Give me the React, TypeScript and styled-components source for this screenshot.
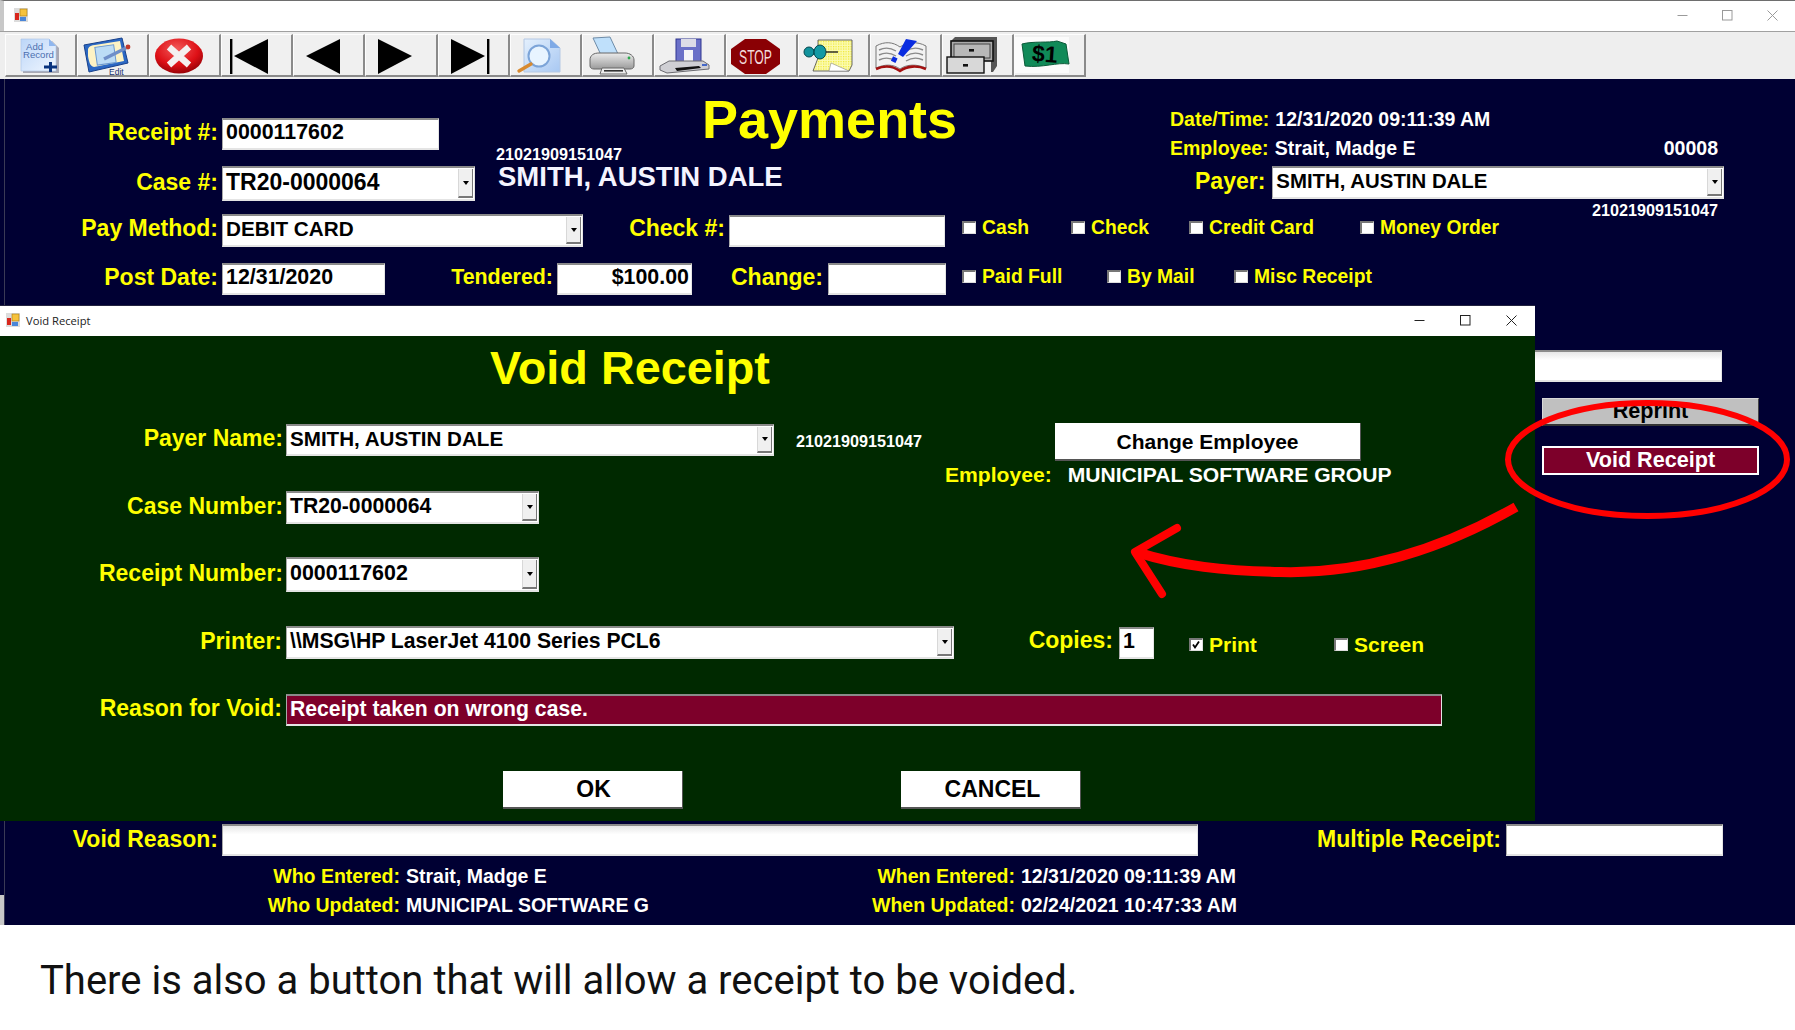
import React from "react";
import styled, { createGlobalStyle } from "styled-components";

const Global = createGlobalStyle`
  html, body { margin: 0; padding: 0; background: #fff; }
  body { font-family: "Liberation Sans", Arial, sans-serif; overflow: hidden; }
`;

const NAVY = "#000033";
const GREEN = "#002900";
const YELLOW = "#ffff00";
const MAROON = "#7d002a";

const Page = styled.div`
  position: relative;
  width: 1795px;
  height: 1030px;
  overflow: hidden;
  background: #fff;
`;

const AppWindow = styled.div`
  display: flex;
  flex-direction: column;
  height: 925px;
`;

const TitleBar = styled.div`
  display: flex;
  align-items: center;
  justify-content: space-between;
  height: 31px;
  flex: none;
  box-sizing: border-box;
  background: #fff;
  border-top: 1px solid #6e6e6e;
  padding-left: 10px;
  padding-bottom: 2px;
  border-left: 4px solid #c8c8c8;
`;

const WinControls = styled.div<{ $dark?: boolean }>`
  display: flex;
  align-items: center;
  gap: ${(p) => (p.$dark ? 35 : 34)}px;
  padding-right: ${(p) => (p.$dark ? 18 : 17)}px;
  padding-bottom: ${(p) => (p.$dark ? 2 : 0)}px;
  color: ${(p) => (p.$dark ? "#222" : "#9a9a9a")};
`;

const Toolbar = styled.div`
  display: flex;
  flex: none;
  height: 48px;
  box-sizing: border-box;
  background: #eeeeee;
  border-top: 1px solid #a0a0a0;
  padding: 2px 0 1px 5px;
`;

const ToolButton = styled.div`
  width: 72.1px;
  height: 43px;
  flex: none;
  box-sizing: border-box;
  padding: 1px 0 0 4px;
  background: #f0f0f0;
  border-left: 1px solid #fdfdfd;
  border-top: 1px solid #fdfdfd;
  border-right: 2px solid #8a8a8a;
  border-bottom: 2px solid #8a8a8a;
  svg { display: block; overflow: visible; }
`;

const Form = styled.div`
  position: relative;
  flex: 1;
  background: ${NAVY};
  &::before {
    content: "";
    position: absolute;
    left: 4px;
    top: 0;
    bottom: 0;
    width: 1px;
    background: #3a3a55;
  }
  &::after {
    content: "";
    position: absolute;
    left: 0;
    bottom: 0;
    width: 4px;
    height: 30px;
    background: #c8c8c8;
  }
`;

const TopBlock = styled.div`
  display: flex;
  height: 135px;
`;

const LeftStack = styled.div`
  width: 496px;
  flex: none;
  padding-top: 39px;
  display: flex;
  flex-direction: column;
  gap: 16px;
`;

const CenterCol = styled.div`
  width: 674px;
  flex: none;
  padding-top: 14px;
`;

const RightCol = styled.div`
  width: 553px;
  flex: none;
  padding-top: 28px;
`;

const Title = styled.div<{ $size: number; $left: number; $height: number }>`
  color: ${YELLOW};
  font-weight: 700;
  font-size: ${(p) => p.$size}px;
  line-height: ${(p) => p.$height}px;
  margin-left: ${(p) => p.$left}px;
  white-space: nowrap;
`;

const SmallId = styled.div`
  color: #fff;
  font-weight: 700;
  font-size: 16.2px;
  line-height: 18px;
  white-space: nowrap;
`;

const PayerName = styled.div`
  color: #f4f4ff;
  font-weight: 700;
  font-size: 27.5px;
  line-height: 30px;
  margin: -1px 0 0 2px;
  white-space: nowrap;
`;

const InfoLine = styled.div<{ $mt?: number; $h?: number }>`
  display: flex;
  height: ${(p) => p.$h ?? 24}px;
  align-items: center;
  margin-top: ${(p) => p.$mt ?? 0}px;
  font-size: 19.5px;
  font-weight: 700;
  color: #fff;
  white-space: nowrap;
`;

const InfoKey = styled.span`
  color: ${YELLOW};
  margin-right: 6px;
`;

const PushRight = styled.span`
  margin-left: auto;
  padding-right: 5px;
`;

const Row = styled.div<{ $mt?: number; $ml?: number }>`
  display: flex;
  align-items: center;
  margin-top: ${(p) => p.$mt ?? 0}px;
  margin-left: ${(p) => p.$ml ?? 0}px;
`;

const TopRow = styled(Row)`
  align-items: flex-start;
`;

const Label = styled.div<{ $w?: number; $size?: number; $ml?: number; $gap?: number; $pb?: number }>`
  ${(p) => (p.$w ? `width: ${p.$w}px;` : "")}
  margin-left: ${(p) => p.$ml ?? 0}px;
  margin-right: ${(p) => p.$gap ?? 4}px;
  flex: none;
  box-sizing: border-box;
  text-align: right;
  color: ${YELLOW};
  font-weight: 700;
  font-size: ${(p) => p.$size ?? 23}px;
  line-height: 26px;
  padding-bottom: ${(p) => p.$pb ?? 4}px;
  white-space: nowrap;
`;

const Field = styled.div<{
  $w: number;
  $h: number;
  $size?: number;
  $right?: boolean;
  $bg?: string;
  $color?: string;
  $fade?: boolean;
}>`
  position: relative;
  width: ${(p) => p.$w}px;
  height: ${(p) => p.$h}px;
  flex: none;
  box-sizing: border-box;
  display: flex;
  align-items: center;
  justify-content: ${(p) => (p.$right ? "flex-end" : "flex-start")};
  padding: 0 2px 3px 3px;
  background: ${(p) => p.$bg ?? "#fff"};
  color: ${(p) => p.$color ?? "#000"};
  font-weight: 700;
  font-size: ${(p) => p.$size ?? 21.4}px;
  white-space: nowrap;
  overflow: hidden;
  border-top: 2px solid #8a8a8a;
  border-left: 1px solid #a8a8a8;
  border-right: 1px solid #e4e4e4;
  border-bottom: 2px solid #e4e4e4;
  ${(p) => (p.$fade ? "background-image: linear-gradient(#e6e6e6, #ffffff 30%);" : "")}
`;

const DropButton = styled.div`
  position: absolute;
  right: 1px;
  top: 1px;
  bottom: 1px;
  width: 15px;
  background: #f0f0f0;
  border-left: 1px solid #d8d8d8;
  border-right: 1px solid #777;
  border-bottom: 2px solid #777;
  box-sizing: border-box;
  display: flex;
  align-items: center;
  justify-content: center;
  &::after {
    content: "";
    border-left: 3px solid transparent;
    border-right: 3px solid transparent;
    border-top: 4px solid #000;
  }
`;

const Combo: React.FC<{ w: number; h: number; size?: number; children: React.ReactNode }> = ({ w, h, size, children }) => (
  <Field $w={w} $h={h} $size={size}>
    {children}
    <DropButton />
  </Field>
);

const CheckSet = styled.div<{ $ml: number; $mt?: number }>`
  display: flex;
  height: 27px;
  margin-left: ${(p) => p.$ml}px;
  margin-top: ${(p) => p.$mt ?? 0}px;
`;

const CheckItem = styled.div<{ $w: number; $size: number }>`
  width: ${(p) => p.$w}px;
  display: flex;
  align-items: center;
  gap: 6px;
  color: ${YELLOW};
  font-weight: 700;
  font-size: ${(p) => p.$size}px;
  white-space: nowrap;
`;

const Box = styled.div`
  width: 14px;
  height: 13px;
  flex: none;
  box-sizing: border-box;
  background: #fff;
  border-top: 2px solid #777;
  border-left: 2px solid #777;
  border-right: 1px solid #ddd;
  border-bottom: 1px solid #ddd;
  position: relative;
  svg { position: absolute; left: 0; top: 0; }
`;

const Check: React.FC<{ w: number; on?: boolean; size?: number; children: React.ReactNode }> = ({ w, on, size, children }) => (
  <CheckItem $w={w} $size={size ?? 19.3}>
    <Box>
      {on && (
        <svg width="10" height="10" viewBox="0 0 10 10">
          <path d="M2 4.5 L4 7.5 L8 1.5" fill="none" stroke="#000" strokeWidth="1.8" />
        </svg>
      )}
    </Box>
    {children}
  </CheckItem>
);

const SideColumn = styled.div`
  display: flex;
  flex-direction: column;
  align-items: flex-start;
  margin: 55px 0 0 1400px;
`;

const ActionButton = styled.div<{ $danger?: boolean; $mt: number; $h: number }>`
  width: 217px;
  height: ${(p) => p.$h}px;
  margin: ${(p) => p.$mt}px 0 0 142px;
  box-sizing: border-box;
  display: flex;
  align-items: center;
  justify-content: center;
  padding-bottom: 2px;
  font-weight: 700;
  font-size: 21.6px;
  color: ${(p) => (p.$danger ? "#fff" : "#000")};
  background: ${(p) => (p.$danger ? MAROON : "#c0c0c0")};
  border: ${(p) => (p.$danger ? "2px solid #fff" : "1px solid #d8d8d8")};
  ${(p) => (p.$danger ? "" : "border-bottom: 2px solid #333; border-right: 1px solid #444;")}
`;

const AuditRows = styled.div`
  display: flex;
  flex-direction: column;
  margin-top: 6px;
`;

const AuditRow = styled.div`
  display: flex;
  height: 29px;
  align-items: center;
  font-size: 19.5px;
  font-weight: 700;
  color: #fff;
  white-space: nowrap;
`;

const AuditKey = styled.div<{ $w: number }>`
  width: ${(p) => p.$w}px;
  text-align: right;
  color: ${YELLOW};
  margin-right: 6px;
  flex: none;
`;

const AuditValue = styled.div<{ $w: number }>`
  width: ${(p) => p.$w}px;
  flex: none;
`;

const Dialog = styled.div`
  position: absolute;
  left: 0;
  top: 306px;
  width: 1535px;
  height: 515px;
  display: flex;
  flex-direction: column;
  box-shadow: 0 -1px 0 #23233f;
`;

const DialogBar = styled.div`
  display: flex;
  align-items: center;
  justify-content: space-between;
  height: 30px;
  flex: none;
  background: #fff;
  padding-left: 6px;
`;

const DialogCaption = styled.div`
  display: flex;
  align-items: center;
  gap: 6px;
  padding-bottom: 2px;
  font-family: "Open Sans", "Noto Sans", sans-serif;
  font-size: 11.2px;
  color: #222;
`;

const DialogBody = styled.div`
  flex: 1;
  background: ${GREEN};
  padding-top: 4px;
`;

const DialogColumns = styled.div`
  display: flex;
  margin-top: 27px;
`;

const DialogLeft = styled.div`
  width: 945px;
  flex: none;
  padding-top: 1px;
`;

const DialogRight = styled.div`
  flex: 1;
`;

const DialogId = styled(SmallId)`
  margin-left: 22px;
  padding-top: 2px;
`;

const WhiteButton = styled.div<{ $w: number; $h: number; $ml: number; $size?: number; $shift?: number }>`
  width: ${(p) => p.$w}px;
  height: ${(p) => p.$h}px;
  margin-left: ${(p) => p.$ml}px;
  flex: none;
  box-sizing: border-box;
  display: flex;
  align-items: center;
  justify-content: center;
  padding-left: ${(p) => p.$shift ?? 0}px;
  padding-top: 1px;
  background: #fff;
  color: #000;
  font-weight: 700;
  font-size: ${(p) => p.$size ?? 23}px;
  border-right: 1px solid #555;
  border-bottom: 2px solid #555;
`;

const EmployeeLine = styled.div`
  display: flex;
  gap: 16px;
  height: 24px;
  align-items: center;
  margin-top: 2px;
  font-size: 21.1px;
  font-weight: 700;
  color: #fff;
  white-space: nowrap;
`;

const EmployeeKey = styled.span`
  color: ${YELLOW};
`;

const Overlay = styled.svg`
  position: absolute;
  left: 0;
  top: 0;
  pointer-events: none;
`;

const Caption = styled.div`
  height: 105px;
  box-sizing: border-box;
  padding: 33px 0 0 40px;
  font-family: Roboto, "Liberation Sans", sans-serif;
  font-size: 40px;
  line-height: 46px;
  color: #111;
  white-space: nowrap;
`;

const AppIcon = () => (
  <svg width="14" height="14" viewBox="0 0 14 14">
    <rect x="0" y="0" width="14" height="14" fill="#dcdcdc" />
    <rect x="6" y="1" width="7" height="7" fill="#f6c23c" stroke="#a87a10" strokeWidth="0.6" />
    <rect x="1" y="5" width="4" height="7" fill="#d8261c" />
    <rect x="6" y="9" width="6" height="4" fill="#4a86d8" />
  </svg>
);

const Min = () => (
  <svg width="11" height="11" viewBox="0 0 11 11"><path d="M0.5 5.5 H10.5" stroke="currentColor" fill="none" /></svg>
);
const Max = () => (
  <svg width="11" height="11" viewBox="0 0 11 11"><rect x="0.5" y="0.5" width="9.5" height="9.5" stroke="currentColor" fill="none" /></svg>
);
const Close = () => (
  <svg width="11" height="11" viewBox="0 0 11 11"><path d="M0.5 0.5 L10.5 10.5 M10.5 0.5 L0.5 10.5" stroke="currentColor" fill="none" /></svg>
);

const Icon: React.FC<{ children: React.ReactNode }> = ({ children }) => (
  <svg width="60" height="38" viewBox="0 0 60 38">{children}</svg>
);

const icons: React.ReactNode[] = [
  <Icon key="add">
    <defs>
      <linearGradient id="pg" x1="0" y1="0" x2="1" y2="1">
        <stop offset="0" stopColor="#bcd6f8" />
        <stop offset="1" stopColor="#f0f6ff" />
      </linearGradient>
    </defs>
    <path d="M13 5 H42 L49 12 V37 H13 Z" fill="#a8a8b4" />
    <path d="M11 3 H39 L46 10 V35 H11 Z" fill="url(#pg)" stroke="#aac4e8" strokeWidth="0.6" />
    <path d="M39 3 L46 10 H39 Z" fill="#8fb6ee" />
    <text x="16" y="14" fontSize="9.6" fill="#4c6fb0" fontFamily="Liberation Sans">Add</text>
    <text x="13" y="22" fontSize="9.6" fill="#4c6fb0" fontFamily="Liberation Sans">Record</text>
    <path d="M34 31 H47 M40.500 26 V36" stroke="#08327e" strokeWidth="3" fill="none" />
  </Icon>,
  <Icon key="edit">
    <path d="M2 9 L40 2 L46 27 L7 36 Z" fill="#2b68c4" stroke="#17408a" />
    <path d="M6 13 C7 10 10 9 13 9 L38 5 L42 25 L12 31 C8 30 7 26 6 20 Z" fill="#fdf3c4" />
    <rect x="14" y="10" width="19" height="18" fill="#bcdcf5" stroke="#6a98d0" transform="rotate(-8 23 19)" />
    <path d="M22 23 L44 12" stroke="#6f8fc8" strokeWidth="3.4" />
    <circle cx="46" cy="11" r="2.4" fill="#c0392b" />
    <text x="27" y="38.500" fontSize="8.5" fill="#17306e" fontFamily="Liberation Sans">Edit</text>
  </Icon>,
  <Icon key="del">
    <defs>
      <radialGradient id="red" cx="0.45" cy="0.3" r="0.75">
        <stop offset="0" stopColor="#f25a5a" />
        <stop offset="0.6" stopColor="#de1016" />
        <stop offset="1" stopColor="#8c0006" />
      </radialGradient>
    </defs>
    <ellipse cx="25" cy="20" rx="24" ry="17.5" fill="url(#red)" />
    <path d="M15 11 L35 29 M35 11 L15 29" stroke="#f4f0f0" strokeWidth="6.5" fill="none" />
  </Icon>,
  <Icon key="first"><rect x="4" y="3" width="2.4" height="35" fill="#000" /><path d="M8 20 L42 3 V38 Z" fill="#000" /></Icon>,
  <Icon key="prev"><path d="M8 20 L42 3 V38 Z" fill="#000" /></Icon>,
  <Icon key="next"><path d="M8 3 L42 20 L8 38 Z" fill="#000" /></Icon>,
  <Icon key="last"><path d="M8 3 L42 20 L8 38 Z" fill="#000" /><rect x="44" y="3" width="2.4" height="35" fill="#000" /></Icon>,
  <Icon key="zoom">
    <defs>
      <linearGradient id="pg2" x1="0" y1="0" x2="1" y2="1">
        <stop offset="0" stopColor="#e4f0fd" />
        <stop offset="1" stopColor="#a8c8f2" />
      </linearGradient>
    </defs>
    <path d="M9 3 H35 L45 12 V36 H9 Z" fill="url(#pg2)" stroke="#b4c8e4" />
    <path d="M35 3 L45 12 H35 Z" fill="#7faae6" />
    <circle cx="24" cy="20" r="10.5" fill="#e8f4ff" stroke="#7ca4d8" strokeWidth="2" />
    <path d="M16 28 L4 35" stroke="#d88a30" strokeWidth="3.4" strokeLinecap="round" />
  </Icon>,
  <Icon key="print">
    <defs>
      <linearGradient id="body" x1="0" y1="0" x2="0" y2="1">
        <stop offset="0" stopColor="#ececec" />
        <stop offset="1" stopColor="#9a9a9a" />
      </linearGradient>
    </defs>
    <path d="M6 2 L23 1 L31 18 L14 19 Z" fill="#bfe0fb" stroke="#6e8ca8" />
    <path d="M3 24 C3 19 7 17 12 17 H38 C43 17 47 20 47 24 V30 C47 32 45 33 43 33 H7 C5 33 3 32 3 30 Z" fill="url(#body)" stroke="#666" />
    <path d="M15 32 H37 L40 38 H13 Z" fill="#ececec" stroke="#666" />
    <rect x="17" y="34" width="19" height="1.6" fill="#333" />
    <circle cx="42" cy="22" r="1.4" fill="#2aa84a" />
  </Icon>,
  <Icon key="save">
    <rect x="17" y="3" width="25" height="23" fill="#6a70c8" stroke="#2e3490" />
    <rect x="22" y="3" width="15" height="8" fill="#dcdce8" />
    <rect x="25" y="14" width="9" height="12" fill="#f4f4f8" />
    <path d="M1 30 L10 25 H44 L50 29 V33 L8 37 L1 34 Z" fill="#cfcfd4" stroke="#6a6a70" />
    <path d="M16 32 L40 30 L42 32 L18 35 Z" fill="#111" />
    <rect x="43" y="28" width="5" height="2" fill="#4468c8" />
  </Icon>,
  <Icon key="stop">
    <path d="M14 3 H35 L49 13 V28 L35 38 H14 L0 28 V13 Z" fill="#8a0004" />
    <text x="24.5" y="28" textAnchor="middle" fontSize="20" fill="#f2dcdc" fontFamily="Liberation Sans" textLength="33" lengthAdjust="spacingAndGlyphs">STOP</text>
  </Icon>,
  <Icon key="pin">
    <defs>
      <pattern id="dots" width="2.5" height="2.5" patternUnits="userSpaceOnUse">
        <rect width="2.5" height="2.5" fill="#fbfbb0" />
        <rect width="1.2" height="1.2" fill="#f0e834" />
      </pattern>
    </defs>
    <path d="M15 4 H49 V29 L46 35 H10 L15 22 Z" fill="url(#dots)" stroke="#444" strokeWidth="0.8" />
    <path d="M28 27 L46 35 H26 Z" fill="#fff" stroke="#888" strokeWidth="0.6" />
    <path d="M9 13 H16 V19 H9 Z" fill="#108a94" />
    <circle cx="6" cy="16" r="5" fill="#12929c" stroke="#06484e" />
    <ellipse cx="17" cy="16" rx="6" ry="7" fill="#149aa4" stroke="#06484e" />
    <path d="M23 16 H35" stroke="#222" strokeWidth="1.4" />
  </Icon>,
  <Icon key="book">
    <path d="M1 10 C10 5 18 6 25 11 C32 6 42 5 51 10 V32 C42 28 32 28 25 33 C18 28 10 28 1 32 Z" fill="#f2f2f2" stroke="#777" />
    <path d="M4 14 C10 11 16 12 21 15 M4 19 C10 16 16 17 21 20 M4 24 C10 21 16 22 21 25 M31 15 C36 12 42 11 48 14 M31 20 C36 17 42 16 48 19 M31 25 C36 22 42 21 48 24" stroke="#8a8a8a" strokeWidth="1.4" fill="none" />
    <path d="M1 33 C10 29 18 30 25 35 C32 30 42 29 51 33" stroke="#a31010" strokeWidth="2.6" fill="none" />
    <path d="M31 3 L42 5 L28 21 L23 18 Z" fill="#0a2ce0" />
    <rect x="17" y="21" width="5" height="5" fill="#0a2ce0" transform="rotate(25 19 23)" />
  </Icon>,
  <Icon key="cabinet">
    <path d="M4 5 L8 1 H50 V30 L46 36 H44 V5 Z" fill="#555" />
    <rect x="4" y="5" width="42" height="20" fill="#aaa" stroke="#111" strokeWidth="1.6" />
    <rect x="7" y="8" width="36" height="14" fill="#b8b8b8" stroke="#444" />
    <rect x="22" y="13" width="5" height="2.6" fill="#111" />
    <rect x="0" y="21" width="37" height="16" fill="#d8d8d8" stroke="#111" strokeWidth="1.4" />
    <rect x="16" y="28" width="5" height="2.6" fill="#111" />
  </Icon>,
  <Icon key="dollar">
    <rect x="-5" y="1" width="55" height="36" fill="#fbfbfb" />
    <path d="M3 8 C14 5 30 7 38 5 L47 8 L50 28 C38 26 24 32 6 30 Z" fill="#108a58" stroke="#0a5a38" />
    <text x="13" y="26" fontSize="23" fontWeight="700" fill="#000" fontFamily="Liberation Sans" transform="rotate(4 26 20)">$1</text>
  </Icon>,
];

export default function App() {
  return (
    <Page>
      <Global />
      <AppWindow>
        <TitleBar>
          <AppIcon />
          <WinControls>
            <Min />
            <Max />
            <Close />
          </WinControls>
        </TitleBar>
        <Toolbar>
          {icons.map((ic, i) => (
            <ToolButton key={i}>{ic}</ToolButton>
          ))}
        </Toolbar>
        <Form>
          <TopBlock>
            <LeftStack>
              <Row>
                <Label $w={218}>Receipt #:</Label>
                <Field $w={217} $h={32}>0000117602</Field>
              </Row>
              <Row>
                <Label $w={218}>Case #:</Label>
                <Combo w={253} h={35} size={23}>TR20-0000064</Combo>
              </Row>
            </LeftStack>
            <CenterCol>
              <Title $size={54} $left={206} $height={52}>Payments</Title>
              <SmallId>21021909151047</SmallId>
              <PayerName>SMITH, AUSTIN DALE</PayerName>
            </CenterCol>
            <RightCol>
              <InfoLine><InfoKey>Date/Time:</InfoKey>12/31/2020 09:11:39 AM</InfoLine>
              <InfoLine $mt={5}>
                <InfoKey>Employee:</InfoKey>Strait, Madge E<PushRight>00008</PushRight>
              </InfoLine>
              <Row $mt={6} $ml={25}>
                <Label $gap={7}>Payer:</Label>
                <Combo w={452} h={33} size={20.4}>SMITH, AUSTIN DALE</Combo>
              </Row>
              <InfoLine $h={22}>
                <PushRight><SmallId>21021909151047</SmallId></PushRight>
              </InfoLine>
            </RightCol>
          </TopBlock>
          <TopRow>
            <Row>
              <Label $w={218} $pb={6}>Pay Method:</Label>
              <Combo w={361} h={33} size={20.7}>DEBIT CARD</Combo>
              <Label $w={142} $gap={4} $pb={6}>Check #:</Label>
              <Field $w={216} $h={32}>{""}</Field>
            </Row>
            <CheckSet $ml={17}>
              <Check w={109}>Cash</Check>
              <Check w={118}>Check</Check>
              <Check w={171}>Credit Card</Check>
              <Check w={140}>Money Order</Check>
            </CheckSet>
          </TopRow>
          <TopRow $mt={16}>
            <Row>
              <Label $w={218}>Post Date:</Label>
              <Field $w={163} $h={32}>12/31/2020</Field>
              <Label $w={168} $size={21.4} $gap={4}>Tendered:</Label>
              <Field $w={135} $h={32} $right>$100.00</Field>
              <Label $w={131} $gap={5}>Change:</Label>
              <Field $w={118} $h={32}>{""}</Field>
            </Row>
            <CheckSet $ml={16}>
              <Check w={145}>Paid Full</Check>
              <Check w={127}>By Mail</Check>
              <Check w={140}>Misc Receipt</Check>
            </CheckSet>
          </TopRow>
          <SideColumn>
            <Field $w={322} $h={32} $fade>{""}</Field>
            <ActionButton $mt={16} $h={28}>Reprint</ActionButton>
            <ActionButton $mt={20} $h={29} $danger>Void Receipt</ActionButton>
          </SideColumn>
          <Row $mt={349}>
            <Label $w={218} $pb={2}>Void Reason:</Label>
            <Field $w={976} $h={32} $fade>{""}</Field>
            <Label $w={303} $gap={5} $pb={2}>Multiple Receipt:</Label>
            <Field $w={217} $h={32}>{""}</Field>
          </Row>
          <AuditRows>
            <AuditRow>
              <AuditKey $w={400}>Who Entered:</AuditKey>
              <AuditValue $w={300}>Strait, Madge E</AuditValue>
              <AuditKey $w={309}>When Entered:</AuditKey>
              12/31/2020 09:11:39 AM
            </AuditRow>
            <AuditRow>
              <AuditKey $w={400}>Who Updated:</AuditKey>
              <AuditValue $w={300}>MUNICIPAL SOFTWARE G</AuditValue>
              <AuditKey $w={309}>When Updated:</AuditKey>
              02/24/2021 10:47:33 AM
            </AuditRow>
          </AuditRows>
        </Form>
      </AppWindow>
      <Caption>There is also a button that will allow a receipt to be voided.</Caption>

      <Dialog>
        <DialogBar>
          <DialogCaption><AppIcon />Void Receipt</DialogCaption>
          <WinControls $dark>
            <Min />
            <Max />
            <Close />
          </WinControls>
        </DialogBar>
        <DialogBody>
          <Title $size={46.8} $left={490} $height={56}>Void Receipt</Title>
          <DialogColumns>
            <DialogLeft>
              <Row>
                <Label $w={283} $gap={3}>Payer Name:</Label>
                <Combo w={488} h={32} size={20.6}>SMITH, AUSTIN DALE</Combo>
                <DialogId>21021909151047</DialogId>
              </Row>
              <Row $mt={35}>
                <Label $w={283} $gap={3}>Case Number:</Label>
                <Combo w={253} h={33} size={21.2}>TR20-0000064</Combo>
              </Row>
              <Row $mt={33}>
                <Label $w={283} $gap={3}>Receipt Number:</Label>
                <Combo w={253} h={35} size={21.4}>0000117602</Combo>
              </Row>
            </DialogLeft>
            <DialogRight>
              <WhiteButton $w={306} $h={38} $ml={110} $size={21}>Change Employee</WhiteButton>
              <EmployeeLine>
                <EmployeeKey>Employee:</EmployeeKey>MUNICIPAL SOFTWARE GROUP
              </EmployeeLine>
            </DialogRight>
          </DialogColumns>
          <TopRow $mt={34}>
            <Row>
              <Label $w={282}>Printer:</Label>
              <Combo w={668} h={33} size={21.2}>\\MSG\HP LaserJet 4100 Series PCL6</Combo>
              <Label $w={159} $gap={6} $pb={6}>Copies:</Label>
              <Field $w={35} $h={32}>1</Field>
            </Row>
            <CheckSet $ml={35} $mt={5}>
              <Check w={145} on size={21}>Print</Check>
              <Check w={100} size={21}>Screen</Check>
            </CheckSet>
          </TopRow>
          <Row $mt={35}>
            <Label $w={282}>Reason for Void:</Label>
            <Field $w={1156} $h={32} $bg={MAROON} $color="#fff" $size={21.2}>Receipt taken on wrong case.</Field>
          </Row>
          <Row $mt={45}>
            <WhiteButton $w={180} $h={38} $ml={503} $shift={2}>OK</WhiteButton>
            <WhiteButton $w={180} $h={38} $ml={218} $shift={4}>CANCEL</WhiteButton>
          </Row>
        </DialogBody>
      </Dialog>

      <Overlay width="1795" height="1030" viewBox="0 0 1795 1030">
        <ellipse cx="1647.5" cy="459.5" rx="139.5" ry="56.5" fill="none" stroke="#ff0000" strokeWidth="6" />
        <path d="M1516 507 C1430 556 1350 574 1280 572 C1225 571 1180 566 1136 552" fill="none" stroke="#ff0000" strokeWidth="10" strokeLinecap="butt" />
        <path d="M1177 528 L1135 552 L1162 594" fill="none" stroke="#ff0000" strokeWidth="8" strokeLinecap="round" strokeLinejoin="round" />
      </Overlay>
    </Page>
  );
}
